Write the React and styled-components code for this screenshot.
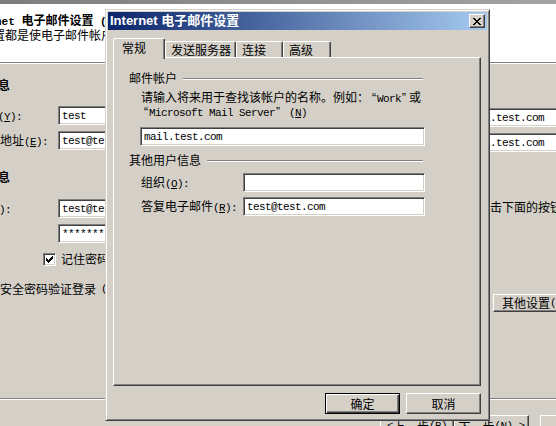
import React from "react";
import styled, { createGlobalStyle } from "styled-components";

const CJK = `"Noto Sans CJK SC", "Liberation Sans", sans-serif`;
const MONO = `"Liberation Mono", "DejaVu Sans Mono", monospace`;

const GlobalStyle = createGlobalStyle`
  html, body { margin: 0; padding: 0; background: #d4d0c8; overflow: hidden; }
  #root { width: 556px; height: 426px; }
`;

const Screen = styled.div`
  position: relative;
  width: 556px;
  height: 426px;
  overflow: hidden;
  background: #d4d0c8;
  font-family: ${CJK};
  font-size: 12px;
  line-height: 14px;
  color: #000;
`;

const Latin = styled.span`
  font-family: ${MONO};
  font-size: 11px;
  line-height: 1;
  letter-spacing: ${(p) => (p.$wide ? 0 : -0.6)}px;
`;

const Quote = styled.span`
  display: inline-block;
  width: 8px;
  font-family: "Liberation Sans", sans-serif;
  font-size: 12px;
  line-height: 1;
  text-align: ${(p) => (p.$open ? "right" : "left")};
  padding: ${(p) => (p.$open ? "0 1px 0 0" : "0 0 0 1px")};
  box-sizing: border-box;
`;

const Key = styled.u`
  text-underline-offset: 1px;
`;

/* ---------- background wizard window ---------- */

const Wizard = styled.div`
  width: 672px;
  height: 426px;
  margin-left: -46px;
  display: flex;
  flex-direction: column;
`;

const CaptionStrip = styled.div`
  height: 4px;
  background: linear-gradient(to right, #7a7a7a, #a8a8a8);
`;

const Banner = styled.div`
  height: 58px;
  box-sizing: border-box;
  padding-top: 9px;
  background: #fff;
  display: flex;
  flex-direction: column;
`;

const BannerTitle = styled.div`
  font-weight: 700;
  padding-left: 8px;
  white-space: nowrap;
`;

const BannerText = styled.div`
  padding-left: 3px;
  white-space: nowrap;
`;

const Etched = styled.div`
  height: 0;
  border-top: 1px solid #808080;
  border-bottom: 1px solid #fff;
`;

const WizardBody = styled.div`
  flex: 1;
  min-height: 0;
  display: grid;
  grid-template-columns: 368px 1fr;
`;

const Column = styled.div`
  display: flex;
  flex-direction: column;
  padding-top: 14px;
`;

const Heading = styled.div`
  font-weight: 700;
  padding-left: ${(p) => p.$indent ?? 8}px;
  margin-top: ${(p) => p.$top ?? 0}px;
`;

const FieldRow = styled.div`
  display: flex;
  align-items: center;
  height: 19px;
  margin-top: ${(p) => p.$top}px;
`;

const FieldLabel = styled.div`
  width: ${(p) => p.$w}px;
  box-sizing: border-box;
  padding-left: ${(p) => p.$pad ?? 0}px;
  text-indent: ${(p) => p.$shift ?? 0}px;
  flex-shrink: 0;
  white-space: nowrap;
`;

const TextBox = styled.div`
  box-sizing: border-box;
  width: ${(p) => p.$w}px;
  height: 19px;
  flex-shrink: 0;
  background: #fff;
  border: 1px solid;
  border-color: #808080 #fff #fff #808080;
  box-shadow: inset 1px 1px #404040, inset -1px -1px #d4d0c8;
  padding: 0 3px;
  display: flex;
  align-items: center;
  font-family: ${MONO};
  font-size: 11px;
  letter-spacing: -0.6px;
  white-space: nowrap;
  overflow: hidden;
`;

const CheckRow = styled.div`
  display: flex;
  align-items: center;
  gap: 5px;
  margin-top: ${(p) => p.$top}px;
  padding-left: ${(p) => p.$indent}px;
  white-space: nowrap;
`;

const CheckBox = styled.span`
  box-sizing: border-box;
  width: 13px;
  height: 13px;
  flex-shrink: 0;
  background: #fff;
  border: 1px solid;
  border-color: #808080 #fff #fff #808080;
  box-shadow: inset 1px 1px #404040, inset -1px -1px #d4d0c8;
  display: flex;
  align-items: center;
  justify-content: center;
`;

const Paragraph = styled.div`
  margin-top: ${(p) => p.$top}px;
  width: 304px;
`;

const PushButton = styled.div`
  box-sizing: border-box;
  width: ${(p) => p.$w}px;
  height: ${(p) => p.$h ?? 21}px;
  flex-shrink: 0;
  margin-top: ${(p) => p.$top ?? 0}px;
  margin-left: ${(p) => p.$left ?? 0}px;
  background: #d4d0c8;
  border: 1px solid;
  border-color: ${(p) =>
    p.$default ? "#000" : "#fff #404040 #404040 #fff"};
  box-shadow: ${(p) =>
    p.$default
      ? "inset 1px 1px #fff, inset -1px -1px #404040, inset -2px -2px #808080"
      : "inset -1px -1px #808080"};
  display: flex;
  align-items: center;
  justify-content: ${(p) => (p.$align === "left" ? "flex-start" : "center")};
  padding-left: ${(p) => (p.$align === "left" ? 8 : 0)}px;
  white-space: nowrap;
`;

const WizardFooter = styled.div`
  height: 26px;
  box-sizing: border-box;
  padding: 15px 11px 0 0;
  display: flex;
  justify-content: flex-end;
  align-items: flex-start;
`;

const FooterGap = styled.div`
  width: 11px;
`;

/* ---------- foreground dialog ---------- */

const Dialog = styled.div`
  position: absolute;
  left: 105px;
  top: 9px;
  width: 385px;
  height: 412px;
  box-sizing: border-box;
  background: #d4d0c8;
  border: 1px solid;
  border-color: #d4d0c8 #404040 #404040 #d4d0c8;
  box-shadow: inset 1px 1px #fff, inset -1px -1px #808080;
  padding: 2px;
  display: flex;
  flex-direction: column;
`;

const TitleBar = styled.div`
  height: 18px;
  flex-shrink: 0;
  display: flex;
  align-items: center;
  justify-content: space-between;
  padding: 0 2px 0 2px;
  background: linear-gradient(to right, #0a246a, #a6caf0);
`;

const TitleText = styled.div`
  color: #fff;
  font-family: "Liberation Sans", "Noto Sans CJK SC", sans-serif;
  font-weight: 700;
  font-size: 13px;
  line-height: 16px;
  white-space: nowrap;
`;

const CloseButton = styled.div`
  box-sizing: border-box;
  width: 16px;
  height: 14px;
  background: #d4d0c8;
  border: 1px solid;
  border-color: #fff #404040 #404040 #fff;
  box-shadow: inset -1px -1px #808080;
  display: flex;
  align-items: center;
  justify-content: center;
`;

const DialogBody = styled.div`
  flex: 1;
  display: flex;
  flex-direction: column;
  padding: 8px 6px 4px 5px;
`;

const TabStrip = styled.div`
  height: 19px;
  display: flex;
  align-items: flex-end;
  position: relative;
  z-index: 1;
`;

const Tab = styled.div`
  box-sizing: border-box;
  width: ${(p) => p.$w}px;
  height: ${(p) => (p.$active ? 21 : 16)}px;
  margin-bottom: ${(p) => (p.$active ? -2 : 0)}px;
  padding-left: ${(p) => (p.$active ? 8 : 5)}px;
  padding-bottom: ${(p) => (p.$active ? 2 : 0)}px;
  background: #d4d0c8;
  border-top: 1px solid #fff;
  border-left: 1px solid #fff;
  border-right: 1px solid #404040;
  box-shadow: inset -1px 0 #808080;
  border-radius: 2px 2px 0 0;
  display: flex;
  align-items: center;
  white-space: nowrap;
`;

const Panel = styled.div`
  box-sizing: border-box;
  height: 329px;
  border: 1px solid;
  border-color: #fff #404040 #404040 #fff;
  box-shadow: inset -1px -1px #808080;
  padding: 13px 0 0 15px;
`;

const PanelInner = styled.div`
  width: 296px;
  display: flex;
  flex-direction: column;
`;

const GroupHeader = styled.div`
  display: flex;
  align-items: center;
  height: 14px;
  margin-top: ${(p) => p.$top ?? 0}px;
`;

const GroupLine = styled.div`
  flex: 1;
  height: 0;
  margin: 2px 2px 0 6px;
  border-top: 1px solid #808080;
  border-bottom: 1px solid #fff;
`;

const Description = styled.div`
  margin-top: 5px;
  padding-left: 12px;
  white-space: nowrap;
`;

const DescLine = styled.div`
  height: 14px;
`;

const ButtonRow = styled.div`
  margin-top: 7px;
  display: flex;
  justify-content: flex-end;
  gap: 6px;
`;

const CheckMark = () => (
  <svg width="7" height="7" viewBox="0 0 7 7" shapeRendering="crispEdges">
    <path
      d="M0 2h1v3h-1zM1 3h1v3h-1zM2 4h1v3h-1zM3 3h1v3h-1zM4 2h1v3h-1zM5 1h1v3h-1zM6 0h1v3h-1z"
      fill="#000"
    />
  </svg>
);

const CloseGlyph = () => (
  <svg width="8" height="7" viewBox="0 0 8 7" shapeRendering="crispEdges">
    <path
      d="M0 0h2v1h-2zM6 0h2v1h-2zM1 1h2v1h-2zM5 1h2v1h-2zM2 2h4v1h-4zM3 3h2v1h-2zM2 4h4v1h-4zM1 5h2v1h-2zM5 5h2v1h-2zM0 6h2v1h-2zM6 6h2v1h-2z"
      fill="#000"
    />
  </svg>
);

export default function App() {
  return (
    <>
      <GlobalStyle />
      <Screen>
        <Wizard>
          <CaptionStrip />
          <Banner>
            <BannerTitle>
              <Latin $wide>Internet </Latin>电子邮件设置<Latin $wide> (POP3)</Latin>
            </BannerTitle>
            <BannerText>这些设置都是使电子邮件帐户正常运行的必要设置。</BannerText>
          </Banner>
          <Etched />
          <WizardBody>
            <Column>
              <Heading>用户信息</Heading>
              <FieldRow $top={14}>
                <FieldLabel $w={104} $shift={-4}>
                  您的姓名<Latin>(<Key>Y</Key>):</Latin>
                </FieldLabel>
                <TextBox $w={160}>test</TextBox>
              </FieldRow>
              <FieldRow $top={6}>
                <FieldLabel $w={104} $shift={-2}>
                  电子邮件地址<Latin>(<Key>E</Key>):</Latin>
                </FieldLabel>
                <TextBox $w={160}>test@test.com</TextBox>
              </FieldRow>
              <Heading $top={20}>登录信息</Heading>
              <FieldRow $top={15}>
                <FieldLabel $w={104} $shift={-3}>
                  用户名<Latin>(<Key>U</Key>):</Latin>
                </FieldLabel>
                <TextBox $w={160}>test@test.com</TextBox>
              </FieldRow>
              <FieldRow $top={6}>
                <FieldLabel $w={104} />
                <TextBox $w={160}>*******</TextBox>
              </FieldRow>
              <CheckRow $top={9} $indent={89}>
                <CheckBox>
                  <CheckMark />
                </CheckBox>
                记住密码<Latin>(<Key>R</Key>)</Latin>
              </CheckRow>
              <CheckRow $top={16} $indent={4}>
                <CheckBox />
                使用安全密码验证登录<Latin>(SPA)(<Key>L</Key>)</Latin>
              </CheckRow>
            </Column>
            <Column>
              <Heading $indent={0}>服务器信息</Heading>
              <FieldRow $top={16}>
                <FieldLabel $w={140}>
                  接收邮件服务器<Latin>(<Key>I</Key>):</Latin>
                </FieldLabel>
                <TextBox $w={180}>mail.test.com</TextBox>
              </FieldRow>
              <FieldRow $top={6}>
                <FieldLabel $w={140}>
                  发送邮件服务器<Latin>(<Key>O</Key>):</Latin>
                </FieldLabel>
                <TextBox $w={180}>mail.test.com</TextBox>
              </FieldRow>
              <Heading $indent={0} $top={18}>
                测试帐户设置
              </Heading>
              <Paragraph $top={16}>
                填写完这些信息之后，建议您单击下面的按钮测试帐户。
                <Latin>(</Latin>需要网络连接<Latin>)</Latin>
              </Paragraph>
              <PushButton $w={110} $h={21} $top={10} $left={10}>
                测试帐户设置<Latin>(T)...</Latin>
              </PushButton>
              <PushButton $w={90} $h={18} $top={34} $left={171} $align="left">
                其他设置<Latin>(<Key>M</Key>)...</Latin>
              </PushButton>
            </Column>
          </WizardBody>
          <Etched />
          <WizardFooter>
            <PushButton $w={74} $h={23}>
              <Latin>&lt; </Latin>上一步<Latin>(<Key>B</Key>)</Latin>
            </PushButton>
            <PushButton $w={75} $h={23}>
              下一步<Latin>(<Key>N</Key>) &gt;</Latin>
            </PushButton>
            <FooterGap />
            <PushButton $w={75} $h={23}>
              取消
            </PushButton>
          </WizardFooter>
        </Wizard>

        <Dialog>
          <TitleBar>
            <TitleText>Internet 电子邮件设置</TitleText>
            <CloseButton>
              <CloseGlyph />
            </CloseButton>
          </TitleBar>
          <DialogBody>
            <TabStrip>
              <Tab $active $w={52}>常规</Tab>
              <Tab $w={71}>发送服务器</Tab>
              <Tab $w={47}>连接</Tab>
              <Tab $w={48}>高级</Tab>
            </TabStrip>
            <Panel>
              <PanelInner>
                <GroupHeader>
                  邮件帐户
                  <GroupLine />
                </GroupHeader>
                <Description>
                  <DescLine>
                    请输入将来用于查找该帐户的名称。例如：<Quote $open>“</Quote>
                    <Latin>Work</Latin>
                    <Quote>”</Quote>或
                  </DescLine>
                  <DescLine>
                    <Quote $open>“</Quote>
                    <Latin>Microsoft Mail Server</Latin>
                    <Quote>”</Quote>
                    <Latin>
                      {" "}(<Key>N</Key>)
                    </Latin>
                  </DescLine>
                </Description>
                <FieldRow $top={9}>
                  <FieldLabel $w={11} />
                  <TextBox $w={285}>mail.test.com</TextBox>
                </FieldRow>
                <GroupHeader $top={7}>
                  其他用户信息
                  <GroupLine />
                </GroupHeader>
                <FieldRow $top={6}>
                  <FieldLabel $w={114} $pad={12}>
                    组织<Latin>(<Key>O</Key>):</Latin>
                  </FieldLabel>
                  <TextBox $w={182} />
                </FieldRow>
                <FieldRow $top={5}>
                  <FieldLabel $w={114} $pad={12}>
                    答复电子邮件<Latin>(<Key>R</Key>):</Latin>
                  </FieldLabel>
                  <TextBox $w={182}>test@test.com</TextBox>
                </FieldRow>
              </PanelInner>
            </Panel>
            <ButtonRow>
              <PushButton $w={75} $h={21} $default>
                确定
              </PushButton>
              <PushButton $w={75} $h={21}>
                取消
              </PushButton>
            </ButtonRow>
          </DialogBody>
        </Dialog>
      </Screen>
    </>
  );
}
